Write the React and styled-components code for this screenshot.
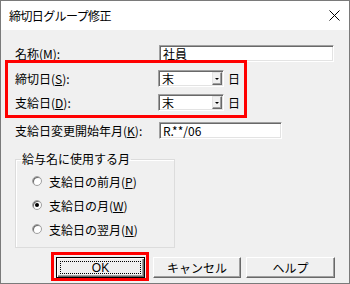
import React from 'react';
import styled, { createGlobalStyle } from 'styled-components';

const GlobalStyle = createGlobalStyle`
  html, body {
    margin: 0;
    padding: 0;
    background: #f0f0f0;
  }
  body {
    font-family: "Noto Sans CJK JP", "Liberation Sans", sans-serif;
    font-size: 12px;
    color: #000;
  }
`;

const Window = styled.div`
  width: 350px;
  height: 284px;
  box-sizing: border-box;
  border: 1px solid #7a7a7a;
  background: #f0f0f0;
  display: flex;
  flex-direction: column;
  overflow: hidden;
`;

const TitleBar = styled.div`
  height: 29px;
  flex: none;
  background: #fff;
  display: flex;
  align-items: center;
  justify-content: space-between;
  padding: 0 9px 0 8px;
`;

const Title = styled.span`
  font-size: 12px;
  letter-spacing: -0.6px;
`;

const Body = styled.div`
  flex: 1;
  display: flex;
  flex-direction: column;
  padding-top: 15px;
`;

const Row = styled.div`
  display: flex;
  align-items: center;
  height: 17px;
  padding-left: ${(p) => p.$indent || 14}px;
  margin-top: ${(p) => p.$top || 0}px;
`;

const Label = styled.span`
  width: ${(p) => p.$width || 143}px;
  flex: none;
  white-space: nowrap;
  line-height: 17px;
`;

const TextBox = styled.div`
  width: ${(p) => p.$width}px;
  height: 17px;
  box-sizing: border-box;
  background: #fff;
  border-top: 1px solid #a0a0a0;
  border-left: 1px solid #a0a0a0;
  border-right: 1px solid #fff;
  border-bottom: 1px solid #fff;
  box-shadow: inset 1px 1px 0 #696969, inset -1px -1px 0 #e3e3e3;
  padding-left: 3px;
  line-height: 15px;
  display: flex;
  align-items: center;
`;

const Combo = styled(TextBox)`
  justify-content: space-between;
  padding-right: 1px;
`;

const DropButton = styled.div`
  width: 10px;
  height: 13px;
  box-sizing: border-box;
  background: #f0f0f0;
  border-top: 1px solid #e3e3e3;
  border-left: 1px solid #e3e3e3;
  border-right: 1px solid #696969;
  border-bottom: 1px solid #696969;
  box-shadow: inset -1px -1px 0 #a0a0a0;
  display: flex;
  align-items: center;
  justify-content: center;

  &::after {
    content: '';
    border-left: 2px solid transparent;
    border-right: 2px solid transparent;
    border-top: 2px solid #000;
  }
`;

const Suffix = styled.span`
  margin-left: 4px;
`;

const RedFrame = styled.div`
  border: 3px solid #ff0000;
  margin-top: ${(p) => p.$top || 0}px;
  margin-left: ${(p) => p.$left || 0}px;
  width: ${(p) => p.$width}px;
  box-sizing: border-box;
`;

const FrameRows = styled.div`
  display: flex;
  flex-direction: column;
  gap: 7px;
  padding: 7px 0 4px;
`;

const Group = styled.fieldset`
  margin: 13px 0 0 14px;
  width: 160px;
  box-sizing: border-box;
  border: 1px solid #dcdcdc;
  box-shadow: 1px 1px 0 #fff inset;
  padding: 0 0 6px 5px;
`;

const Legend = styled.legend`
  padding: 0 1px;
  line-height: 14px;
`;

const RadioRow = styled.label`
  display: flex;
  align-items: center;
  height: 24px;
  padding-left: 11px;
  margin-top: ${(p) => (p.$first ? 3 : 0)}px;
`;

const RadioDot = styled.span`
  width: 10px;
  height: 10px;
  box-sizing: border-box;
  border-radius: 50%;
  background: #fff;
  border: 1px solid #a0a0a0;
  box-shadow: inset 1px 1px 0 #696969;
  margin-right: 7px;
  display: flex;
  align-items: center;
  justify-content: center;

  &::after {
    content: '';
    width: 4px;
    height: 4px;
    border-radius: 50%;
    background: ${(p) => (p.$checked ? '#000' : 'transparent')};
  }
`;

const ButtonBar = styled.div`
  display: flex;
  align-items: flex-start;
  margin-top: 4px;
`;

const Button = styled.div`
  width: ${(p) => p.$width || 88}px;
  height: 21px;
  box-sizing: border-box;
  background: #f0f0f0;
  border-top: 1px solid #fff;
  border-left: 1px solid #fff;
  border-right: 1px solid #696969;
  border-bottom: 1px solid #696969;
  box-shadow: inset -1px -1px 0 #a0a0a0;
  display: flex;
  align-items: center;
  justify-content: center;
  margin-top: ${(p) => p.$top || 0}px;
  margin-left: ${(p) => p.$left || 0}px;
`;

const DefaultButton = styled(Button)`
  border: 1px solid #000;
  box-shadow: inset 1px 1px 0 #fff, inset -1px -1px 0 #696969, inset -2px -2px 0 #a0a0a0;
  padding: 3px;
`;

const Focus = styled.div`
  flex: 1;
  align-self: stretch;
  border: 1px dotted #000;
  display: flex;
  align-items: center;
  justify-content: center;
  font-family: "Liberation Sans", sans-serif;
`;

const CloseIcon = () => (
  <svg width="11" height="11" viewBox="0 0 11 11">
    <path d="M0.5 0.5 L10.5 10.5 M10.5 0.5 L0.5 10.5" stroke="#000" strokeWidth="1" />
  </svg>
);

export default function App() {
  return (
    <>
      <GlobalStyle />
      <Window>
        <TitleBar>
          <Title>締切日グループ修正</Title>
          <CloseIcon />
        </TitleBar>
        <Body>
          <Row>
            <Label $width={144}>名称(<u>M</u>):</Label>
            <TextBox $width={175}>社員</TextBox>
          </Row>
          <RedFrame $top={-2} $left={4} $width={242}>
            <FrameRows>
              <Row $indent={7}>
                <Label>締切日(<u>S</u>):</Label>
                <Combo $width={66}>末<DropButton /></Combo>
                <Suffix>日</Suffix>
              </Row>
              <Row $indent={7}>
                <Label>支給日(<u>D</u>):</Label>
                <Combo $width={66}>末<DropButton /></Combo>
                <Suffix>日</Suffix>
              </Row>
            </FrameRows>
          </RedFrame>
          <Row $top={4}>
            <Label $width={144}>支給日変更開始年月(<u>K</u>):</Label>
            <TextBox $width={123}>R.**/06</TextBox>
          </Row>
          <Group>
            <Legend>給与名に使用する月</Legend>
            <RadioRow $first>
              <RadioDot />支給日の前月(<u>P</u>)
            </RadioRow>
            <RadioRow>
              <RadioDot $checked />支給日の月(<u>W</u>)
            </RadioRow>
            <RadioRow>
              <RadioDot />支給日の翌月(<u>N</u>)
            </RadioRow>
          </Group>
          <ButtonBar>
            <RedFrame $left={50} $width={98}>
              <DefaultButton $left={2} $top={2} $width={89}>
                <Focus>OK</Focus>
              </DefaultButton>
            </RedFrame>
            <Button $top={5} $left={4}>キャンセル</Button>
            <Button $top={5} $left={5} $width={89}>ヘルプ</Button>
          </ButtonBar>
        </Body>
      </Window>
    </>
  );
}
